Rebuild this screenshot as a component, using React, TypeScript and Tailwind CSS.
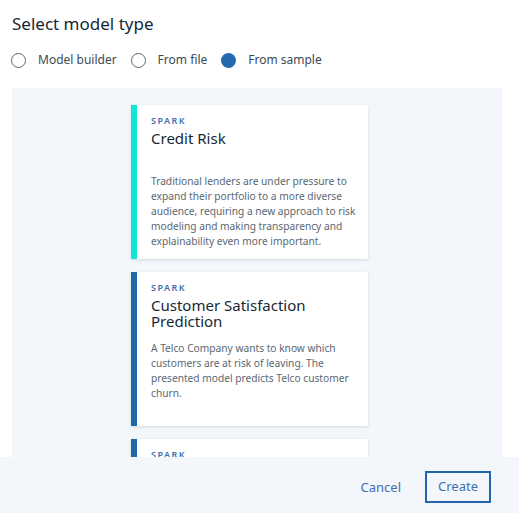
import React from "react";

const cards = [
  {
    color: "bg-[#0fe7d6]",
    title: "Credit Risk",
    desc: "Traditional lenders are under pressure to expand their portfolio to a more diverse audience, requiring a new approach to risk modeling and making transparency and explainability even more important.",
  },
  {
    color: "bg-[#1f68aa]",
    title: "Customer Satisfaction Prediction",
    desc: "A Telco Company wants to know which customers are at risk of leaving. The presented model predicts Telco customer churn.",
  },
  {
    color: "bg-[#1f68aa]",
    title: "Drug Selection",
    desc: "Predict the drug that a patient should be prescribed.",
  },
];

function Radio({ label, checked }: { label: string; checked?: boolean }) {
  return (
    <div className="flex items-center">
      {checked ? (
        <span className="w-[15px] h-[15px] rounded-full bg-[#2469ad]" />
      ) : (
        <span className="w-[15px] h-[15px] rounded-full border border-[#5a6872] bg-white" />
      )}
      <span className="ml-[12px] text-[12px] text-[#3c4a55]">{label}</span>
    </div>
  );
}

export default function App() {
  return (
    <div
      className="w-[519px] h-[513px] bg-white relative overflow-hidden"
      style={{ fontFamily: '"Noto Sans", "Open Sans", sans-serif' }}
    >
      <div className="px-[12px] pt-[12px]">
        <h1 className="text-[17px] leading-[24px] text-[#152935]">Select model type</h1>
        <div className="flex items-center gap-[14px] mt-[15px] -ml-[1px]">
          <Radio label="Model builder" />
          <Radio label="From file" />
          <Radio label="From sample" checked />
        </div>
        <div className="mt-[19px] w-[490px] h-[370px] bg-[#f3f6fa] overflow-hidden pt-[17px] flex flex-col items-start gap-[13px] pl-[119px]">
          {cards.map((c, i) => (
            <div
              key={i}
              className="w-[237px] h-[154px] shrink-0 bg-white flex shadow-[0_1px_3px_rgba(0,0,0,0.12)]"
            >
              <div className={`w-[6px] h-full shrink-0 ${c.color}`} />
              <div className="pl-[14px] pr-[10px] pt-[10px]">
                <div className="text-[9px] leading-[12px] tracking-[1.5px] font-semibold text-[#3d70b2]">SPARK</div>
                <div className="mt-[3px] h-[42px] text-[15px] leading-[16px] text-[#152935]">{c.title}</div>
                <div className="mt-[2px] text-[10.2px] leading-[15px] text-[#5a6872]">{c.desc}</div>
              </div>
            </div>
          ))}
        </div>
      </div>
      <div className="absolute left-0 right-0 bottom-0 h-[56px] bg-[#f3f6fa] flex items-start justify-end pr-[28px] pt-[14px]">
        <span className="text-[13px] leading-[32px] text-[#3d70b2] mr-[24px]">Cancel</span>
        <button className="w-[66px] h-[32px] border-2 border-[#2166ac] text-[13px] text-[#3d70b2] bg-transparent">
          Create
        </button>
      </div>
    </div>
  );
}
